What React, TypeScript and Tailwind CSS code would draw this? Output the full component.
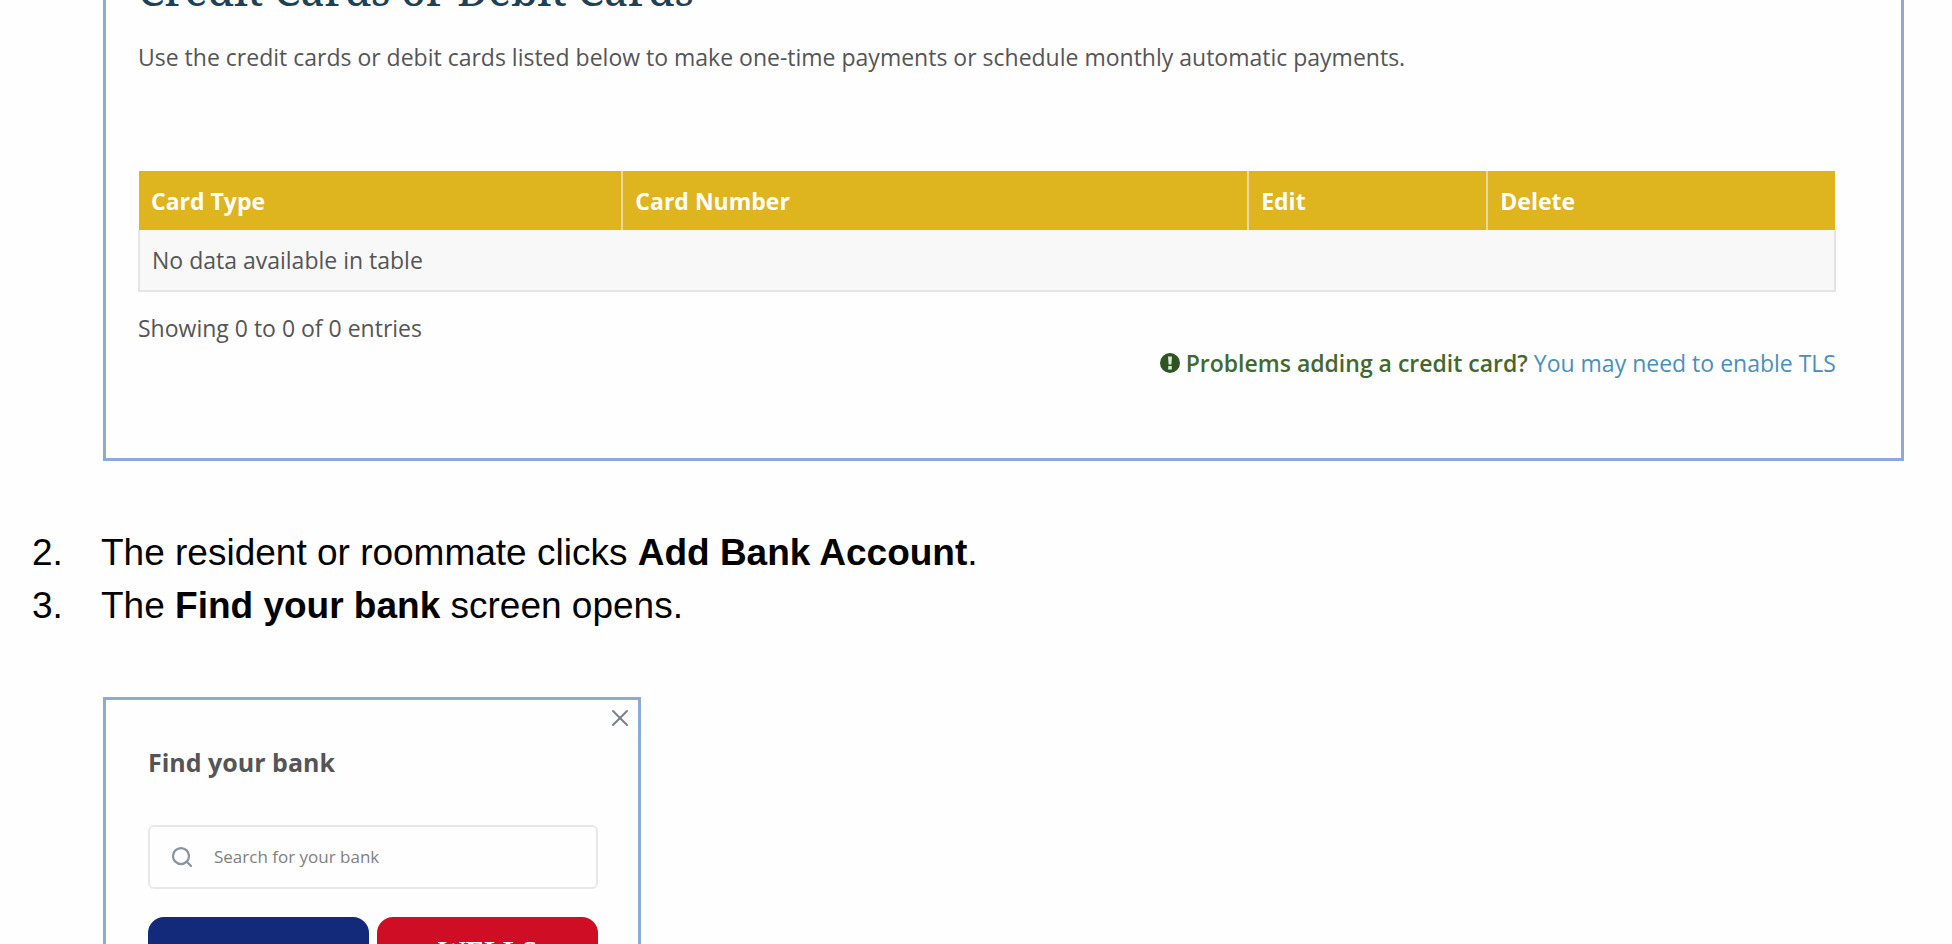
import { Search, X } from "lucide-react";

function InfoIcon() {
  return (
    <svg viewBox="0 0 20 20" className="size-5 shrink-0" aria-hidden="true">
      <circle cx="10" cy="10" r="10" fill="#2f5423" />
      <path d="M8 3.500h4l-.6 8H8.600z" fill="#dfe8d8" />
      <rect x="8.200" y="13" width="3.600" height="3.500" fill="#dfe8d8" />
    </svg>
  );
}

function CardsPanel() {
  return (
    <section className="ml-[103px] mr-12 flex h-[461px] flex-col overflow-hidden border-[3px] border-t-0 border-[#8dabd2] pl-8 pr-[65px] font-['Open_Sans',sans-serif] text-[23px] leading-8 text-[#555]">
      <h2 className="-mt-[34px] font-['Noto_Serif','DejaVu_Serif',serif] text-[42px] font-medium leading-[48px] text-[#1d4257]">
        Credit Cards or Debit Cards
      </h2>
      <p className="mt-[27px]">
        Use the credit cards or debit cards listed below to make one-time payments or schedule monthly automatic payments.
      </p>
      <table className="mt-[98px] w-full table-fixed border-collapse text-left">
        <colgroup>
          <col className="w-[28.5%]" />
          <col className="w-[36.9%]" />
          <col className="w-[14.1%]" />
          <col />
        </colgroup>
        <thead>
          <tr className="h-[59px] bg-[#deb41f] text-white">
            <th className="border-r-2 border-[#e9d9a0] px-3">Card Type</th>
            <th className="border-r-2 border-[#e9d9a0] px-3">Card Number</th>
            <th className="border-r-2 border-[#e9d9a0] px-3">Edit</th>
            <th className="px-3">Delete</th>
          </tr>
        </thead>
        <tbody>
          <tr className="h-[61px] bg-[#f8f8f8]">
            <td colSpan={4} className="border-2 border-t-0 border-[#e4e4e4] px-3">
              No data available in table
            </td>
          </tr>
        </tbody>
      </table>
      <p className="mt-5">Showing 0 to 0 of 0 entries</p>
      <p className="mt-[3px] flex items-center justify-end gap-1.5">
        <InfoIcon />
        <span className="font-semibold text-[#43682f]">Problems adding a credit card?</span>
        <a href="#tls" className="text-[#4a8fbb]">You may need to enable TLS</a>
      </p>
    </section>
  );
}

function BankDialog() {
  return (
    <section className="ml-[103px] mt-[65px] flex w-[538px] flex-col border-[3px] border-b-0 border-[#8dabd2] font-['Open_Sans',sans-serif]">
      <button type="button" aria-label="Close" className="mr-1 mt-1 self-end text-[#7d8288]">
        <X className="size-7" strokeWidth={1.75} />
      </button>
      <div className="flex flex-col pl-[42px] pr-10 pt-3">
        <h2 className="text-[25px] font-bold leading-9 text-[#555]">Find your bank</h2>
        <label className="mt-[45px] flex h-[64px] items-center gap-5 rounded-md border-2 border-[#e8e8e8] px-5">
          <Search className="size-6 shrink-0 text-[#8a93a0]" strokeWidth={2.25} />
          <input
            type="search"
            aria-label="Search for your bank"
            placeholder="Search for your bank"
            className="w-full bg-transparent text-[17px] outline-none placeholder:text-[#808080]"
          />
        </label>
        <div className="mt-7 grid grid-cols-2 gap-2">
          <button type="button" aria-label="Bank" className="h-28 rounded-2xl bg-[#132a7a]" />
          <button
            type="button"
            className="flex h-28 flex-col items-center rounded-2xl bg-[#cf0d25] pt-5 font-['Liberation_Serif',serif] text-[28px] font-bold leading-7 text-white"
          >
            WELLS
          </button>
        </div>
      </div>
    </section>
  );
}

export default function App() {
  return (
    <main className="h-screen overflow-hidden bg-[#fefefe]">
      <CardsPanel />
      <ol className="ml-8 mt-[65px] font-['Liberation_Sans',sans-serif] text-[37px] leading-[53px] text-black">
        <li className="flex">
          <span className="w-[69px]">2.</span>
          <span>The resident or roommate clicks <b>Add Bank Account</b>.</span>
        </li>
        <li className="flex">
          <span className="w-[69px]">3.</span>
          <span>The <b>Find your bank</b> screen opens.</span>
        </li>
      </ol>
      <BankDialog />
    </main>
  );
}
